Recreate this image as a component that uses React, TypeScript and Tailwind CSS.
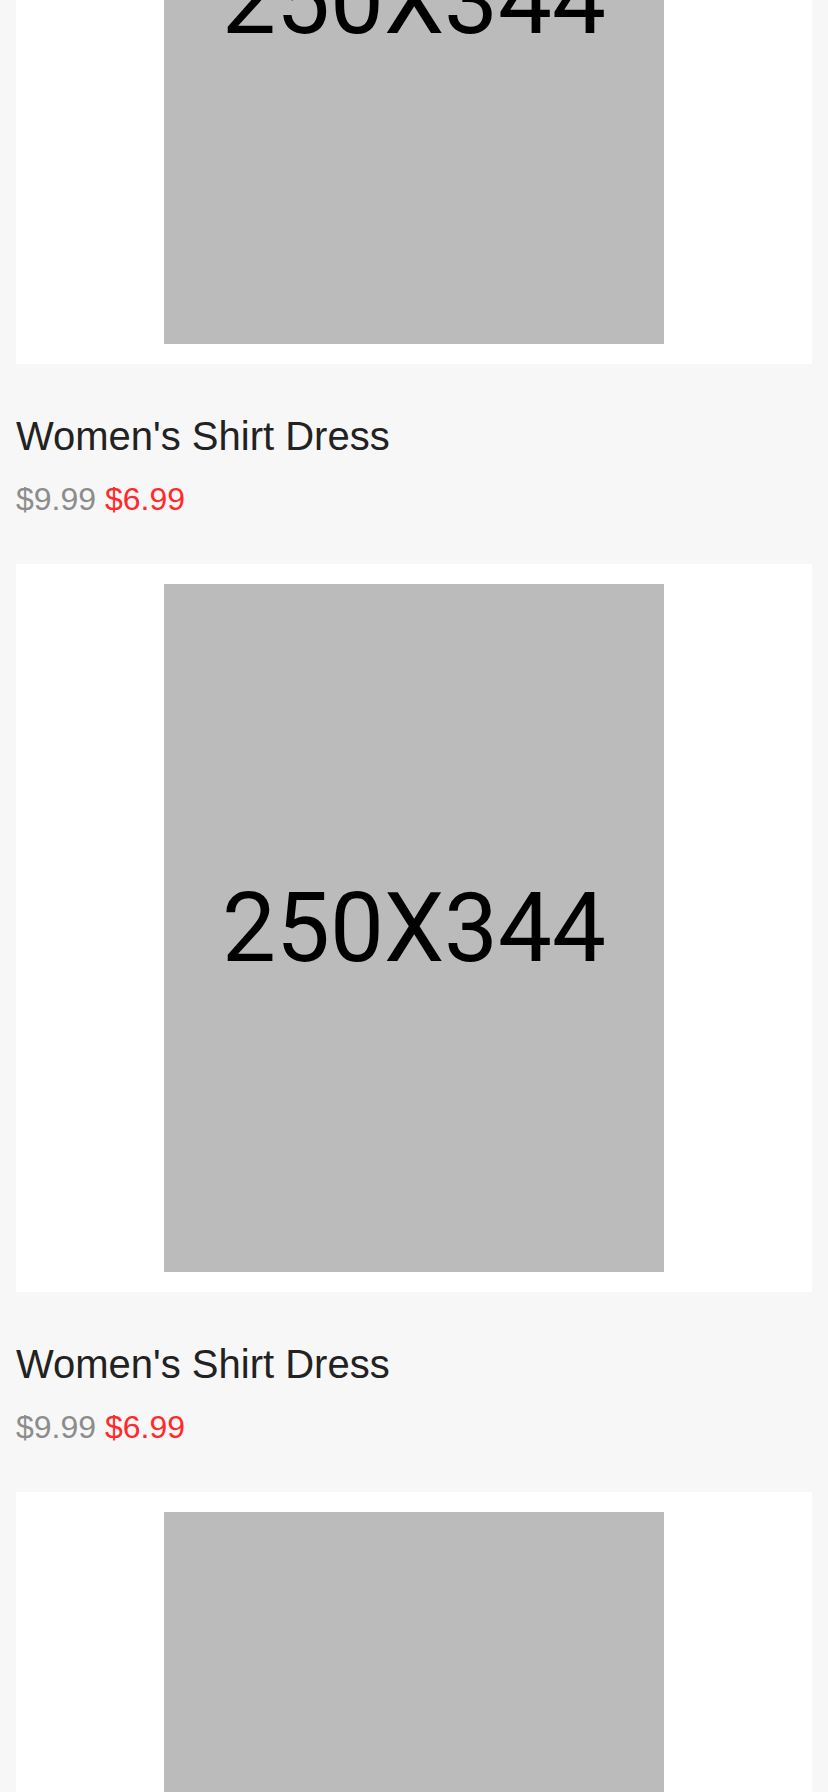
import React from "react";

function Card() {
  return (
    <div>
      <div className="bg-white mx-[16px] pt-[20px] pb-[20px] flex justify-center">
        <div className="w-[500px] h-[688px] bg-[#bbbbbb] flex items-center justify-center">
          <span
            className="text-[96px] leading-none text-black"
            style={{ fontFamily: "Roboto, 'Liberation Sans', sans-serif" }}
          >
            250X344
          </span>
        </div>
      </div>
      <div className="h-[200px] px-[16px] pt-[48px]">
        <div className="text-[40px] leading-[48px] text-[#222222]">Women's Shirt Dress</div>
        <div className="mt-[19px] text-[32px] leading-[40px]">
          <span className="text-[#8c8c8c]">$9.99</span>{" "}
          <span className="text-[#ff2a2a]">$6.99</span>
        </div>
      </div>
    </div>
  );
}

export default function App() {
  return (
    <div
      className="w-[828px] h-[1792px] overflow-hidden bg-[#f7f7f7]"
      style={{ fontFamily: "'Liberation Sans', Arial, sans-serif" }}
    >
      <div className="-mt-[364px]">
        <Card />
        <Card />
        <Card />
      </div>
    </div>
  );
}
